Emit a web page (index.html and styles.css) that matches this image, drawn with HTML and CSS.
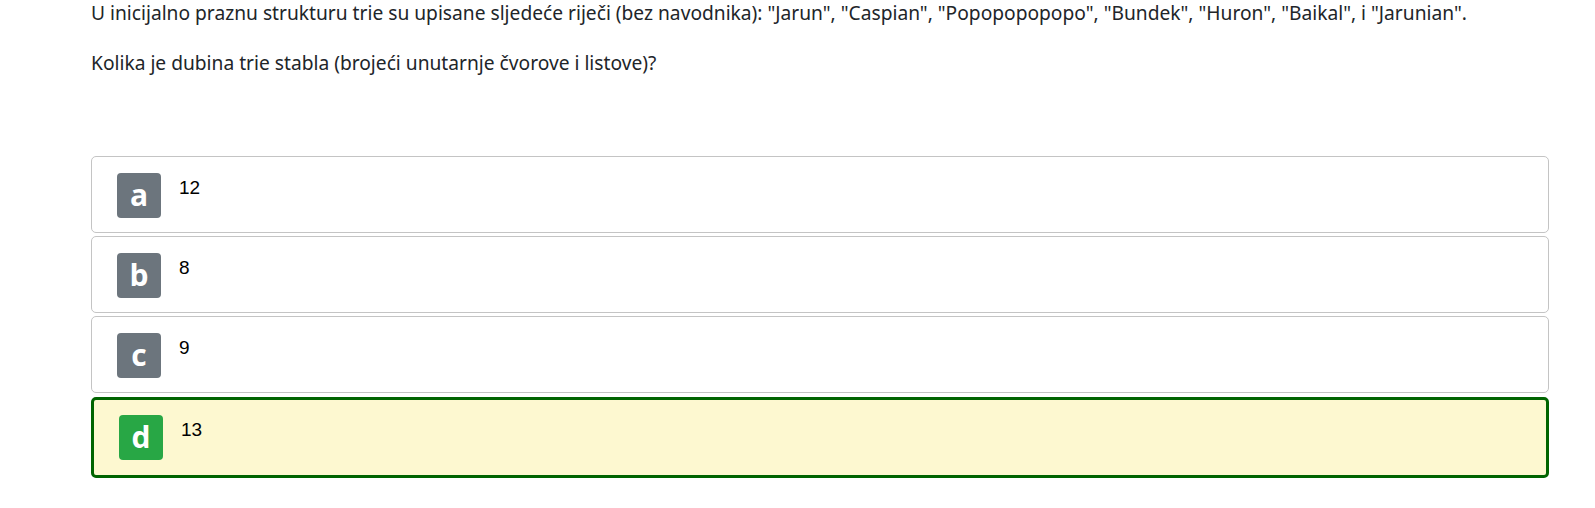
FILE: index.html
```html
<!DOCTYPE html>
<html lang="hr">
<head>
<meta charset="utf-8">
<title>Trie</title>
<link rel="stylesheet" href="styles.css">
</head>
<body>
<main class="quiz">
  <div class="question">
    <p>U inicijalno praznu strukturu trie su upisane sljedeće riječi (bez navodnika): "Jarun", "Caspian", "Popopopopopo", "Bundek", "Huron", "Baikal", i "Jarunian".</p>
    <p>Kolika je dubina trie stabla (brojeći unutarnje čvorove i listove)?</p>
  </div>
  <ul class="answers">
    <li class="answer"><span class="badge">a</span><span class="answer-text">12</span></li>
    <li class="answer"><span class="badge">b</span><span class="answer-text">8</span></li>
    <li class="answer"><span class="badge">c</span><span class="answer-text">9</span></li>
    <li class="answer answer-selected"><span class="badge badge-correct">d</span><span class="answer-text">13</span></li>
  </ul>
</main>
</body>
</html>
```

FILE: styles.css
```css
html, body {
  margin: 0;
  padding: 0;
  background: #ffffff;
}

.quiz {
  padding: 0 46px 0 91px;
  font-family: "Noto Sans", "Open Sans", sans-serif;
  color: #212529;
}

.question p {
  margin: 0;
  font-size: 19.2px;
  line-height: 26px;
}

.question p + p {
  margin-top: 24px;
}

.answers {
  list-style: none;
  margin: 80px 0 0 0;
  padding: 0;
  display: flex;
  flex-direction: column;
  gap: 3px;
}

.answer {
  display: flex;
  align-items: flex-start;
  border: 1px solid #c4c4c4;
  border-radius: 5px;
  padding: 16px 25px 14px 25px;
  background: #ffffff;
}

.answer-selected {
  border: 3px solid #006400;
  padding: 15px 25px 15px 25px;
  background: #fdf8d0;
  margin-top: 1px;
}

.badge {
  flex: none;
  width: 44px;
  height: 45px;
  border-radius: 4px;
  background: #6c757d;
  color: #ffffff;
  font-family: "Open Sans", "Noto Sans", sans-serif;
  font-weight: 700;
  font-size: 30px;
  line-height: 44px;
  text-align: center;
}

.badge-correct {
  background: #28a745;
}

.answer-text {
  margin-left: 18px;
  margin-top: 3px;
  font-family: "Liberation Sans", Arial, sans-serif;
  font-size: 19px;
  line-height: 24px;
  color: #000000;
}
```
